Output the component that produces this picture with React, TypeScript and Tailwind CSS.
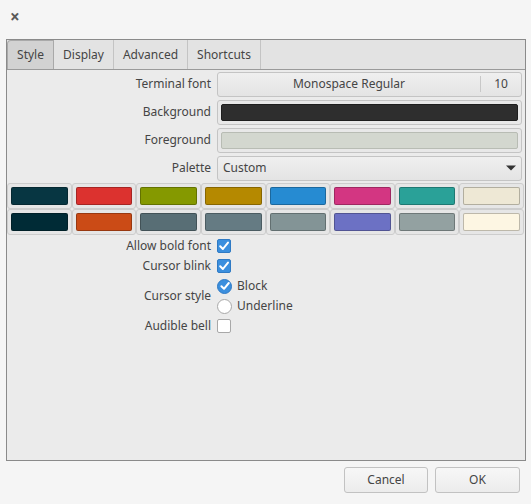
import React from "react";

const row1 = ["#073642", "#dc322f", "#859900", "#b58900", "#268bd2", "#d33682", "#2aa198", "#eee8d5"];
const row2 = ["#002b36", "#cb4b16", "#586e75", "#657b83", "#839496", "#6c71c4", "#93a1a1", "#fdf6e3"];

function Check({ on }: { on: boolean }) {
  if (!on)
    return <div className="w-[14px] h-[14px] rounded-[2px] border border-[#a8a8a8] bg-white" />;
  return (
    <div className="w-[14px] h-[14px] rounded-[2px] bg-[#3b8fde] border border-[#2f7ac4] flex items-center justify-center">
      <svg width="12" height="12" viewBox="0 0 12 12">
        <path d="M2.2 6.2 L4.9 9 L10 2.6" fill="none" stroke="white" strokeWidth="2" strokeLinecap="round" strokeLinejoin="round" />
      </svg>
    </div>
  );
}

function Radio({ on }: { on: boolean }) {
  if (!on) return <div className="w-[15px] h-[15px] rounded-full border border-[#a8a8a8] bg-white" />;
  return (
    <div className="w-[15px] h-[15px] rounded-full bg-[#3b8fde] border border-[#2f7ac4] flex items-center justify-center">
      <svg width="12" height="12" viewBox="0 0 12 12">
        <path d="M2.4 6.2 L5 8.8 L9.8 3" fill="none" stroke="white" strokeWidth="2" strokeLinecap="round" strokeLinejoin="round" />
      </svg>
    </div>
  );
}

function Label({ children }: { children: React.ReactNode }) {
  return <div className="w-[204px] text-right pr-0 shrink-0">{children}</div>;
}

export default function App() {
  return (
    <div
      className="w-[531px] h-[504px] bg-[#f5f5f5] flex flex-col text-[12px] text-[#454545]"
      style={{ fontFamily: '"Noto Sans", "Open Sans", sans-serif' }}
    >
      <div className="h-[39px] flex items-start pl-[10px] pt-[6px]">
        <span className="text-[17px] font-bold text-[#5a5a5a] leading-[22px]">×</span>
      </div>
      <div className="ml-[6px] w-[520px] h-[422px] border border-[#8a8a8a] flex flex-col bg-[#ebebeb]">
        <div className="h-[30px] flex bg-[#e3e3e3] border-b border-[#9a9a9a] shrink-0">
          <div className="w-[47px] flex items-center justify-center bg-[#d2d2d2] border border-[#a9a9a9] border-b-0 rounded-tl-[4px]">
            Style
          </div>
          <div className="w-[60px] flex items-center justify-center border-r border-[#c4c4c4]">Display</div>
          <div className="w-[74px] flex items-center justify-center border-r border-[#c4c4c4]">Advanced</div>
          <div className="w-[73px] flex items-center justify-center border-r border-[#c4c4c4]">Shortcuts</div>
          <div className="flex-1" />
        </div>
        <div className="flex flex-col pt-[1px]">
          <div className="flex items-center h-[26px] gap-[6px]">
            <Label>Terminal font</Label>
            <div className="w-[305px] h-[25px] border border-[#c4c4c4] rounded-[3px] bg-gradient-to-b from-[#efefef] to-[#e4e4e4] flex items-center">
              <div className="flex-1 text-center">Monospace Regular</div>
              <div className="w-px h-[16px] bg-[#c8c8c8]" />
              <div className="w-[40px] text-center">10</div>
            </div>
          </div>
          <div className="flex items-center h-[26px] gap-[6px] mt-[2px]">
            <Label>Background</Label>
            <div className="w-[305px] h-[25px] border border-[#c4c4c4] rounded-[3px] bg-[#e8e8e8] p-[3px]">
              <div className="w-full h-full bg-[#2e2e2e] rounded-[2px] border border-[#1e1e1e]" />
            </div>
          </div>
          <div className="flex items-center h-[26px] gap-[6px] mt-[2px]">
            <Label>Foreground</Label>
            <div className="w-[305px] h-[25px] border border-[#c4c4c4] rounded-[3px] bg-[#e8e8e8] p-[3px]">
              <div className="w-full h-full bg-[#d3d7cf] rounded-[2px] border border-[#b8bcb4]" />
            </div>
          </div>
          <div className="flex items-center h-[26px] gap-[6px] mt-[2px]">
            <Label>Palette</Label>
            <div className="w-[305px] h-[25px] border border-[#c4c4c4] rounded-[3px] bg-gradient-to-b from-[#efefef] to-[#e4e4e4] flex items-center pl-[5px] pr-[4px]">
              <div className="flex-1">Custom</div>
              <svg width="12" height="8" viewBox="0 0 12 8">
                <path d="M1 1.5 L11 1.5 L6 6.5 Z" fill="#333" />
              </svg>
            </div>
          </div>
          <div className="w-[517px] grid grid-cols-8 mt-[2px]">
            {[...row1, ...row2].map((c, i) => (
              <div key={i} className="h-[26px] border border-[#cdcdcd] rounded-[3px] bg-[#e6e6e6] p-[3px]">
                <div
                  className="w-full h-full rounded-[2px] border border-black/25"
                  style={{ backgroundColor: c }}
                />
              </div>
            ))}
          </div>
          <div className="flex flex-col mt-[1px]">
            <div className="flex items-center h-[20px] gap-[6px]">
              <Label>Allow bold font</Label>
              <Check on />
            </div>
            <div className="flex items-center h-[20px] gap-[6px]">
              <Label>Cursor blink</Label>
              <Check on />
            </div>
            <div className="flex items-center h-[40px] gap-[6px]">
              <Label>Cursor style</Label>
              <div className="flex flex-col">
                <div className="flex items-center h-[20px] gap-[5px]">
                  <Radio on />
                  <span>Block</span>
                </div>
                <div className="flex items-center h-[20px] gap-[5px]">
                  <Radio on={false} />
                  <span>Underline</span>
                </div>
              </div>
            </div>
            <div className="flex items-center h-[20px] gap-[6px]">
              <Label>Audible bell</Label>
              <Check on={false} />
            </div>
          </div>
        </div>
      </div>
      <div className="flex justify-end gap-[7px] pr-[11px] mt-[6px]">
        <div className="w-[84px] h-[26px] border border-[#c2c2c2] rounded-[3px] bg-gradient-to-b from-[#f7f7f7] to-[#ececec] flex items-center justify-center">
          Cancel
        </div>
        <div className="w-[85px] h-[26px] border border-[#c2c2c2] rounded-[3px] bg-gradient-to-b from-[#f7f7f7] to-[#ececec] flex items-center justify-center">
          OK
        </div>
      </div>
    </div>
  );
}
